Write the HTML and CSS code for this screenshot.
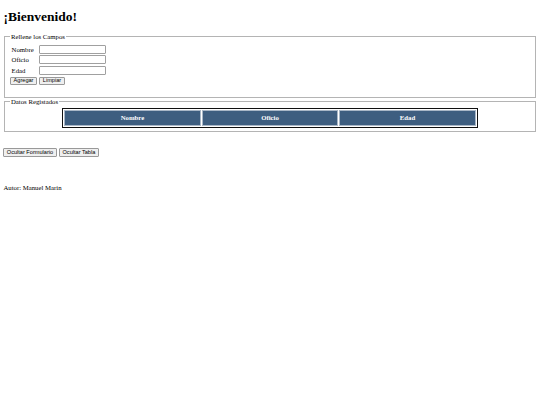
FILE: index.html
```html
<!DOCTYPE html>
<html lang="es">
<head>
<meta charset="utf-8">
<title>Bienvenido</title>
<link rel="stylesheet" href="styles.css">
</head>
<body class="page">
<h1 class="title">¡Bienvenido!</h1>
<fieldset class="panel panel-form">
<legend class="panel-legend">Rellene los Campos</legend>
<table class="form-table">
<tr><td class="form-label">Nombre</td><td class="form-cell"><input class="field" type="text"></td></tr>
<tr><td class="form-label">Oficio</td><td class="form-cell"><input class="field" type="text"></td></tr>
<tr><td class="form-label">Edad</td><td class="form-cell"><input class="field" type="text"></td></tr>
</table>
<div class="button-row">
<button class="btn" type="button">Agregar</button>
<button class="btn" type="button">Limpiar</button>
</div>
</fieldset>
<fieldset class="panel panel-data">
<legend class="panel-legend">Datos Registados</legend>
<table class="data">
<tr><th class="data-head">Nombre</th><th class="data-head">Oficio</th><th class="data-head">Edad</th></tr>
</table>
</fieldset>
<div class="button-row actions">
<button class="btn" type="button">Ocultar Formulario</button>
<button class="btn" type="button">Ocultar Tabla</button>
</div>
<p class="author">Autor: Manuel Marin</p>
</body>
</html>
```

FILE: styles.css
```css
html {
  background: #fff;
}
.page {
  margin: 0;
  padding: 0 3.4px;
  font-family: "Liberation Serif", "Times New Roman", serif;
  font-size: 6.75px;
  color: #000;
}
.title {
  font-size: 13.5px;
  line-height: 15px;
  font-weight: bold;
  margin: 9px 0;
}
.panel {
  margin: 0 0.8px;
  padding: 2.4px 5px 3px;
  border: 1px solid #b4b4b4;
  min-width: 0;
}
.panel-form {
  padding-bottom: 11.6px;
}
.panel-legend {
  padding: 0 0.8px;
  line-height: 7.8px;
}
.form-table {
  border-spacing: 1px;
  border-collapse: separate;
}
.form-table td {
  padding: 0.4px;
}
.form-table .form-label {
  width: 26px;
  text-align: left;
}
.field {
  display: block;
  width: 67px;
  height: 9px;
  box-sizing: border-box;
  padding: 0 1px;
  margin: 0;
  border: 1px solid #a0a0a0;
  border-radius: 1px;
  background: #fff;
  font: 5.6px "Liberation Sans", Arial, sans-serif;
}
.button-row {
  display: flex;
  gap: 2.6px;
  margin-top: 0;
}
.btn {
  height: 8.4px;
  box-sizing: border-box;
  padding: 0 2.4px;
  margin: 0;
  border: 1px solid #999;
  border-radius: 1px;
  background: #efefef;
  color: #000;
  font: 5.6px/1 "Liberation Sans", Arial, sans-serif;
}
.data {
  width: 80%;
  margin: 0 auto;
  border: 1px solid #111;
  border-spacing: 1px;
  border-collapse: separate;
}
.data-head {
  width: 33.33%;
  background: #3e5e80;
  color: #fff;
  font-weight: bold;
  line-height: 7.8px;
  border: 1px solid #a9b7c7;
  padding: 3.1px;
  text-align: center;
}
.actions {
  margin-top: 16.6px;
}
.author {
  margin: 27px 0 0;
  line-height: 7.8px;
}
```
